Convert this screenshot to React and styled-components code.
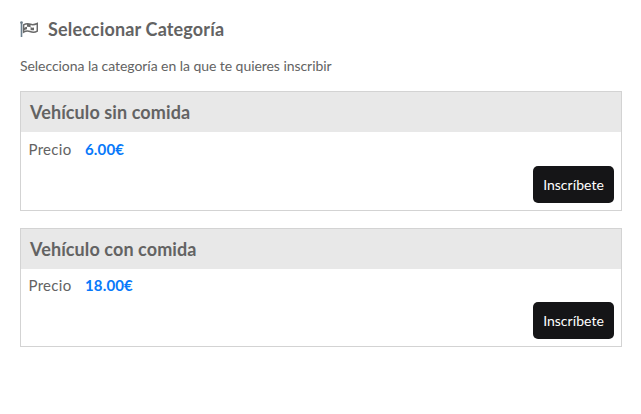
import React from "react";
import styled, { createGlobalStyle } from "styled-components";

const GlobalStyle = createGlobalStyle`
  * { box-sizing: border-box; }
  body { margin: 0; background: #fff; color: #636363; font-family: Lato, "Liberation Sans", sans-serif; }
`;
const Page = styled.main`
  padding: 18px 19px 0 20px;
`;
const Title = styled.h1`
  display: flex;
  align-items: center;
  gap: 10px;
  margin: 0;
  height: 22px;
  font-size: 18px;
  font-weight: 700;
  line-height: 22px;
  letter-spacing: 0.16px;
`;
const FlagSvg = styled.svg`
  flex: none;
  width: 18px;
  height: 16px;
`;
const Intro = styled.p`
  margin: 16px 0;
  font-size: 14px;
  line-height: 19px;
  letter-spacing: -0.055px;
`;
const CategoryList = styled.div`
  display: grid;
  gap: 17px;
`;
const Card = styled.section`
  height: ${({ $compact }) => ($compact ? 119 : 120)}px;
  border: 1px solid #d3d3d3;
`;
const CardHeader = styled.h2`
  margin: 0;
  height: 40px;
  padding: 0 9px;
  background: #e8e8e8;
  font-size: 18px;
  font-weight: 700;
  line-height: 40px;
  letter-spacing: 0.1px;
`;
const CardBody = styled.div`
  display: flex;
  flex-direction: column;
  padding: ${({ $compact }) => ($compact ? 7 : 8)}px 7px 0;
`;
const PriceRow = styled.div`
  display: flex;
  height: 26px;
  padding-left: 0.5px;
  font-size: 15px;
  line-height: 19px;
`;
const PriceLabel = styled.span`
  width: 56.5px;
  letter-spacing: 0.3px;
`;
const Price = styled.strong`
  color: #0879fa;
  font-weight: 700;
  letter-spacing: 0.15px;
`;
const RegisterButton = styled.button`
  align-self: flex-end;
  width: 81px;
  height: 37px;
  padding: 0;
  border: 0;
  border-radius: 5px;
  background: #151517;
  color: #fff;
  font: 400 14px/37px Lato, "Liberation Sans", sans-serif;
`;

const categories = [
  { name: "Vehículo sin comida", price: "6.00€", compact: false },
  { name: "Vehículo con comida", price: "18.00€", compact: true },
];

function FlagIcon() {
  return (
    <FlagSvg viewBox="0 0 18 16" aria-hidden="true">
      <path d="M1.5 1V16" fill="none" stroke="#6b7f8e" strokeWidth="1.6" />
      <circle cx="1.5" cy="1.5" r="1.3" fill="#6b7b87" />
      <path d="M3.6 3.8C6 2.3 8 2.3 10.5 3.3C13 4.3 15 3.6 17.3 2.5V10.1C14.5 11.8 12.3 11.5 10 10.5C7.8 9.5 6 9.7 3.6 11.2Z" fill="none" stroke="#696969" strokeWidth="1.5" />
      <path d="M7 2.9Q9 2.6 10.6 3.4V6.3Q9 5.6 7 5.8ZM3.6 7.2Q5 6.2 7 5.8V8.3Q5 8.7 3.6 9.6ZM10.6 6.3Q12.2 6.9 14 6.6V9.3Q12.2 9.5 10.6 8.9Z" fill="#696969" />
    </FlagSvg>
  );
}

export default function App() {
  return (
    <Page>
      <GlobalStyle />
      <Title><FlagIcon />Seleccionar Categoría</Title>
      <Intro>Selecciona la categoría en la que te quieres inscribir</Intro>
      <CategoryList>
        {categories.map(({ name, price, compact }) => (
          <Card key={name} $compact={compact}>
            <CardHeader>{name}</CardHeader>
            <CardBody $compact={compact}>
              <PriceRow><PriceLabel>Precio</PriceLabel><Price>{price}</Price></PriceRow>
              <RegisterButton>Inscríbete</RegisterButton>
            </CardBody>
          </Card>
        ))}
      </CategoryList>
    </Page>
  );
}
